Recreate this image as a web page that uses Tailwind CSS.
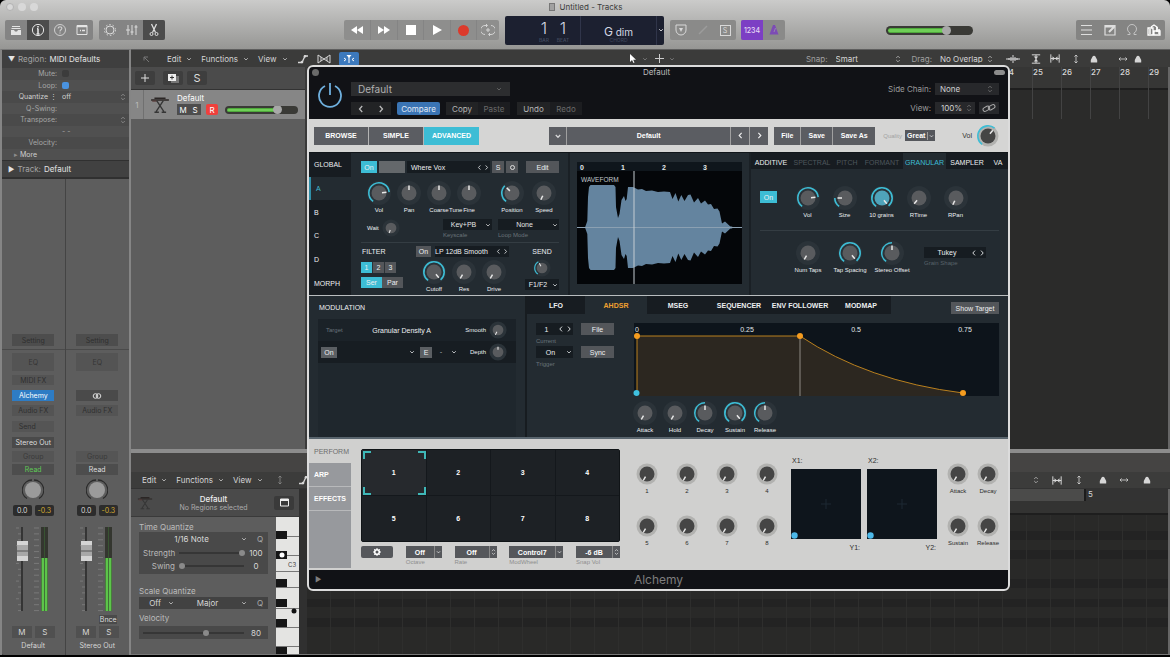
<!DOCTYPE html>
<html lang="en">
<head>
<meta charset="utf-8">
<title>Untitled - Tracks</title>
<script src="https://cdn.jsdelivr.net/npm/@tailwindcss/browser@4"></script>
</head>
<body class="relative flex h-screen flex-col overflow-hidden bg-black pb-[2px] font-[Inter,sans-serif] text-[8px] leading-none text-[#d6d6d6]">

<svg class="hidden" aria-hidden="true">
  <symbol id="down" viewBox="0 0 8 8"><path d="M2.2 3.200 4 5 5.800 3.200" fill="none" stroke="currentColor" stroke-opacity=".75"/></symbol>
  <symbol id="prev" viewBox="0 0 8 8"><path d="M5 1.600 2.800 4 5 6.400" fill="none" stroke="currentColor" stroke-opacity=".9"/></symbol>
  <symbol id="next" viewBox="0 0 8 8"><path d="M3 1.600 5.200 4 3 6.400" fill="none" stroke="currentColor" stroke-opacity=".9"/></symbol>
  <symbol id="step" viewBox="0 0 8 8"><path d="M2.2 3 4 1.200 5.800 3M2.200 5 4 6.800 5.800 5" fill="none" stroke="currentColor" stroke-width=".8" stroke-opacity=".8"/></symbol>
  <symbol id="fit" viewBox="0 0 12 10"><path d="M1 0v10M11 0v10M1 5h10" fill="none" stroke="currentColor" stroke-width="1.200"/><path d="M3 2.200 6 5 3 7.800zM9 2.200 6 5l3 2.800z" fill="currentColor"/></symbol>
  <symbol id="keys" viewBox="0 0 18 18"><path d="M1 4.500h16M4 3h10" stroke="#2b2625" stroke-width="1.400"/><path d="M2 5.500h4" stroke="#5a3a38"/><path d="M6 5l6.500 10M12 5 5.500 15M4 15.500h4M10.500 15.500h4" stroke="#363636" stroke-width="1.200" fill="none"/></symbol>
  <symbol id="curve" viewBox="0 0 12 10"><path d="M1 8.500h4L8 2h3" fill="none" stroke="currentColor" stroke-width="1.300"/><circle cx="5" cy="8" r="1.300" fill="currentColor"/><circle cx="8" cy="2.300" r="1.300" fill="currentColor"/></symbol>
  <symbol id="thumb" viewBox="0 0 8 8"><path d="M.8 7.400V5L2.600 1.600a1.600 1.600 0 0 1 2.800 0L7.200 5v2.400z" fill="currentColor"/></symbol>
  <symbol id="updown" viewBox="0 0 8 10"><path d="M4 1v8M2.400 2.600 4 1l1.600 1.600M2.400 7.400 4 9l1.600-1.600" fill="none" stroke="currentColor" stroke-opacity=".8"/></symbol>
  <symbol id="leftright" viewBox="0 0 10 8"><path d="M1 4h8M2.600 2.400 1 4l1.600 1.600M7.400 2.400 9 4 7.400 5.600" fill="none" stroke="currentColor" stroke-opacity=".8"/></symbol>
</svg>

<!-- Title bar and transport -->
<header class="flex h-[49px] shrink-0 flex-col rounded-t-md bg-gradient-to-b from-[#cbcbca] to-[#969694]">
  <div class="relative flex h-[14px] items-center justify-center gap-1 text-[8px] text-[#3c3c3c]">
    <div class="absolute left-[6px] flex gap-1">
      <button aria-label="Close" class="size-2 rounded-full border border-[#b2b2b2] bg-[#d8d8d8]"></button>
      <button aria-label="Minimise" class="size-2 rounded-full bg-[#d8d8d8]"></button>
      <button aria-label="Zoom" class="size-2 rounded-full bg-[#d8d8d8]"></button>
    </div>
    <svg class="size-2" viewBox="0 0 8 8"><path d="M1 0h6v8H1z" fill="#777"/><path d="M2 2h4M2 4h4M2 6h4" stroke="#ccc"/></svg>
    <h1>Untitled - Tracks</h1>
  </div>
  <div class="flex h-[32px] items-center pr-[5px] pl-[5px]">
    <div class="flex h-5 overflow-hidden rounded-xs bg-[#848484] text-[#e4e4e4]">
      <button aria-label="Library" class="grid w-[22px] place-items-center"><svg class="size-3" viewBox="0 0 12 12"><path d="M2 2h8v1H2zM1.500 4h9v1h-9zM1 6h3l1 1.500h2L8 6h3v5H1z" fill="currentColor"/></svg></button>
      <button aria-label="Inspector" class="grid w-[22px] place-items-center bg-[#4c4c4c]"><svg class="size-[14px]" viewBox="0 0 14 14"><circle cx="7" cy="7" r="5.600" fill="none" stroke="currentColor"/><path d="M7 3v1.500M7 5.500V11M5.500 11h3M6 5.800h1" stroke="currentColor" stroke-width="1.600"/></svg></button>
      <button aria-label="Help" class="grid w-[22px] place-items-center text-[#cfcfcf]"><svg class="size-[14px]" viewBox="0 0 14 14"><circle cx="7" cy="7" r="5.500" fill="none" stroke="currentColor"/><path d="M5.200 5.500c0-2.400 3.800-2.200 3.600 0C8.700 6.800 7 6.800 7 8.400M7 9.400v1.200" fill="none" stroke="currentColor" stroke-width="1.200"/></svg></button>
      <button aria-label="Toolbar" class="grid w-[22px] place-items-center"><svg class="size-3" viewBox="0 0 12 12"><path d="M1 1.500h10v9H1z" fill="none" stroke="currentColor"/><path d="M1 2.500h10M4 6.500h1M6 6.500h3" stroke="currentColor" stroke-width="1.600"/></svg></button>
    </div>
    <div class="ml-[6px] flex h-5 overflow-hidden rounded-xs bg-[#848484] text-[#dcdcdc]">
      <button aria-label="Smart controls" class="grid w-[22px] place-items-center"><svg class="size-[14px]" viewBox="0 0 14 14"><circle cx="7" cy="7" r="4" fill="none" stroke="currentColor"/><circle cx="7" cy="7" r="5.500" fill="none" stroke="currentColor" stroke-dasharray="1.500 2"/></svg></button>
      <button aria-label="Mixer" class="grid w-[22px] place-items-center"><svg class="size-[14px]" viewBox="0 0 14 14"><path d="M3 2v10M7 2v10M11 2v10M1 7h4M5.500 9h3M9.500 4h3" stroke="currentColor"/></svg></button>
      <button aria-label="Editors" class="grid w-[22px] place-items-center bg-[#4c4c4c]"><svg class="size-[14px]" viewBox="0 0 14 14"><path d="M4.500 1 8.500 9.500M9.500 1 5.500 9.500" stroke="currentColor" stroke-width="1.300"/><circle cx="4.500" cy="11" r="1.500" fill="none" stroke="currentColor"/><circle cx="9.500" cy="11" r="1.500" fill="none" stroke="currentColor"/></svg></button>
    </div>
    <div class="flex-[179]"></div>
    <div class="flex h-5 divide-x divide-[#848484] overflow-hidden rounded-xs bg-[#8e8e8d] text-white">
      <button aria-label="Rewind" class="grid w-[27px] place-items-center"><svg class="h-2 w-3" viewBox="0 0 12 8"><path d="M6 0v8L0 4zM12 0v8L6 4z" fill="currentColor"/></svg></button>
      <button aria-label="Forward" class="grid w-[27px] place-items-center"><svg class="h-2 w-3" viewBox="0 0 12 8"><path d="M0 0v8l6-4zM6 0v8l6-4z" fill="currentColor"/></svg></button>
      <button aria-label="Stop" class="grid w-[26px] place-items-center"><span class="size-[10px] bg-white"></span></button>
      <button aria-label="Play" class="grid w-[27px] place-items-center"><svg class="size-[10px]" viewBox="0 0 10 10"><path d="M1 0v10l9-5z" fill="currentColor"/></svg></button>
      <button aria-label="Record" class="grid w-[26px] place-items-center"><span class="size-[11px] rounded-full bg-[#dc3a2b]"></span></button>
      <button aria-label="Cycle" class="grid w-[22px] place-items-center text-[#d4d4d4]"><svg class="size-[14px]" viewBox="0 0 14 14"><path d="M4 11.500a4.500 4.500 0 0 1 0-9h2M10 2.500a4.500 4.500 0 0 1 0 9H8M5 1l1.500 1.500L5 4M9 10l-1.500 1.500L9 13M5 7h4M7 5v4" fill="none" stroke="currentColor"/></svg></button>
    </div>
    <div class="ml-[6px] flex h-[29px] w-[159px] rounded-xs bg-[#1c2030] text-[#d4d8e4]">
      <div class="flex flex-1 items-start justify-end gap-[3px] border-r border-[#30354a] pr-[9px] pt-[4px] text-[16px] font-light">
        <div class="flex w-4 flex-col items-center"><span>1</span><span class="mt-[2px] text-[5px] text-[#596078]">BAR</span></div><div class="flex w-4 flex-col items-center"><span>1</span><span class="mt-[2px] text-[5px] text-[#596078]">BEAT</span></div>
      </div>
      <div class="flex w-[75px] flex-col items-center pt-[10px]"><span class="text-[10px]"><span class="text-[12px]">G</span> dim</span><span class="text-[5px] text-[#434a60]">CHORD</span></div>
      <button aria-label="Display mode" class="grid w-2 place-items-center border-l border-[#30354a] text-white"><svg class="size-2"><use href="#down"/></svg></button>
    </div>
    <div class="ml-[6px] flex h-5 rounded-xs bg-[#8a8a89] text-[#d8d8d8]">
      <button aria-label="Replace" class="grid w-[22px] place-items-center"><svg class="size-3" viewBox="0 0 12 12"><path d="M1 1h10v5a5 5 0 0 1-10 0z" fill="none" stroke="currentColor"/><path d="M4 4h4L6 8z" fill="currentColor"/></svg></button>
      <button aria-label="Tuner" class="grid w-[22px] place-items-center text-[#9c9c9c]"><svg class="size-3" viewBox="0 0 12 12"><path d="M2 10l8-8" stroke="currentColor" stroke-width="1.500"/></svg></button>
      <button aria-label="Solo" class="grid w-[22px] place-items-center"><span class="grid size-[11px] place-items-center border border-current text-[7px]">S</span></button>
    </div>
    <div class="ml-[5px] flex h-5 overflow-hidden rounded-xs bg-[#8a8a89]">
      <button class="w-[22px] bg-[#7c3fc4] text-[7px] font-medium text-[#e4d8f4]">1234</button>
      <button aria-label="Metronome" class="grid w-[22px] place-items-center text-[#7c4bb5]"><svg class="size-[10px]" viewBox="0 0 10 10"><path d="M4 0h2l3.500 9.500h-9z" fill="currentColor"/><path d="M5 7 6.500 3" stroke="#aaa" stroke-width=".6"/></svg></button>
    </div>
    <div class="flex-[101]"></div>
    <hslider-bar label="Master volume" value="70" class="block h-[9px] w-[87px]"></hslider-bar>
    <div class="flex-[103]"></div>
    <div class="flex h-5 rounded-xs bg-[#848483] text-[#dedede]">
      <button aria-label="List editors" class="grid w-[22px] place-items-center"><svg class="size-3" viewBox="0 0 12 12"><path d="M0 1.500h11M0 6h11M0 10.500h11" stroke="currentColor"/></svg></button>
      <button aria-label="Notes" class="grid w-[23px] place-items-center"><svg class="size-3" viewBox="0 0 12 12"><path d="M1 1.500h10v9.500H1z" fill="none" stroke="currentColor" stroke-width="1.200"/><path d="M1 2.500h10M5 8l5-5" stroke="currentColor" stroke-width="2"/></svg></button>
      <button aria-label="Loops" class="grid w-[22px] place-items-center text-[#c4c4c4]"><svg class="size-3" viewBox="0 0 12 12"><path d="M4 10.500V9A4.500 4.500 0 1 1 8 9v1.500M1.500 10.500H4M8 10.500h2.500" fill="none" stroke="currentColor"/></svg></button>
      <button aria-label="Media" class="grid w-[22px] place-items-center text-white"><svg class="h-3 w-[14px]" viewBox="0 0 14 12"><path d="M1 4h5v7H1zM4 3l3-2 3 2v4M7 7h6v4H7z" fill="none" stroke="currentColor" stroke-width="1.300"/><path d="M10 3v5M12 5v5M3 5v5" stroke="currentColor" stroke-width="1.500"/></svg></button>
    </div>
  </div>
</header>

<div class="flex min-h-0 flex-1 rounded-b-sm bg-[#5d5d5d]">

  <!-- Inspector -->
  <aside class="flex w-[131px] shrink-0 flex-col border-x-2 border-t border-x-[#858585] border-t-[#777]">
    <button class="flex h-[18px] items-center gap-[3px] bg-[#3f3f3f] px-[6px] text-left text-[8px] text-[#e4e4e4]"><span class="text-[7px]">▼</span><span class="text-[#a5a5a5]">Region:</span>MIDI Defaults</button>
    <div class="grid h-[92px] grid-rows-8 bg-[#4a4a4a] text-[7px] text-[#a6a6a6] *:grid *:grid-cols-[55px_1fr_8px] *:items-center *:gap-x-[5px] *:pr-[2px] *:text-right">
      <label><span>Mute:</span><input type="checkbox" class="size-[7px] appearance-none rounded-xs bg-[#3c3c3c]"></label>
      <label class="bg-[#505050]"><span>Loop:</span><input type="checkbox" checked class="size-[7px] appearance-none rounded-xs bg-[#4a93e0]"></label>
      <div><span class="text-[#d0d0d0]">Quantize ⋮</span><span class="text-left text-[#d0d0d0]">off</span><svg class="size-2"><use href="#step"/></svg></div>
      <div class="bg-[#505050]"><span>Q-Swing:</span></div>
      <div><span>Transpose:</span><span></span><svg class="size-2"><use href="#step"/></svg></div>
      <div class="bg-[#505050]"><span></span><span class="text-left">- -</span></div>
      <div><span>Velocity:</span></div>
      <div class="bg-[#505050] text-[#cfcfcf]"><button class="pl-3 text-left"><span class="text-[#8c8c8c]">▸</span> More</button></div>
    </div>
    <button class="flex h-[19px] items-center gap-[3px] border-t border-b-2 border-t-[#303030] border-b-[#303030] bg-[#414141] px-[6px] text-left text-[8px] text-[#e4e4e4]"><span class="text-[7px]">▶</span><span class="text-[#a5a5a5]">Track:</span><span>Default</span></button>
    <div class="grid flex-1 grid-cols-2 divide-x divide-[#444]">
      <section data-strip="Default" class="flex flex-col items-center justify-end pb-[3px]"></section>
      <section data-strip="Stereo Out" data-bus="true" class="flex flex-col items-center justify-end pb-[3px]"></section>
    </div>
  </aside>

  <main class="flex min-w-0 flex-1 flex-col">
    <!-- Tracks area -->
    <nav class="flex h-[18px] shrink-0 items-center border-t border-[#5e5e5e] bg-[#3b3b3a] pr-[28px] text-[8px]">
      <button aria-label="Back" class="ml-[11px] w-2 text-[#777]"><svg class="size-2" viewBox="0 0 8 8"><path d="M7 7 2 2M2 5.500V2h4" fill="none" stroke="currentColor"/></svg></button>
      <button class="ml-[17px] flex items-center gap-1">Edit<svg class="size-2"><use href="#down"/></svg></button>
      <button class="ml-[8px] flex items-center gap-1">Functions<svg class="size-2"><use href="#down"/></svg></button>
      <button class="ml-[8px] flex items-center gap-1">View<svg class="size-2"><use href="#down"/></svg></button>
      <button aria-label="Automation" class="ml-[8px]"><svg class="h-[10px] w-3"><use href="#curve"/></svg></button>
      <button aria-label="Flex" class="ml-2"><svg class="h-[10px] w-[14px]" viewBox="0 0 14 10"><path d="M1 1v8M13 1v8M1 1l6 4 6-4M1 9l6-4 6 4M4 3v4M10 3v4" fill="none" stroke="currentColor"/></svg></button>
      <button aria-label="Catch" class="ml-2 grid h-[14px] w-5 place-items-center rounded-xs bg-[#3c79bd] text-white"><svg class="h-[10px] w-3" viewBox="0 0 12 10"><path d="M6 3v6M1 4l2 1.500L1 7M11 4 9 5.500 11 7" stroke="currentColor" fill="none"/><path d="M3.500 1h5L6 4z" fill="currentColor"/></svg></button>
      <div class="flex-[270]"></div>
      <button aria-label="Pointer tool" class="flex items-center gap-1"><svg class="size-[9px]" viewBox="0 0 9 9"><path d="M2 0v8l2-2 1.500 3 1-.5L5.200 5.800H8z" fill="#fff"/></svg><svg class="size-2 text-[#888]"><use href="#down"/></svg></button>
      <button aria-label="Marquee tool" class="ml-[6px] flex items-center gap-1"><svg class="size-[9px]" viewBox="0 0 9 9"><path d="M4.500 0v9M0 4.500h9" stroke="#ccc"/></svg><svg class="size-2 text-[#888]"><use href="#down"/></svg></button>
      <div class="flex-[130]"></div>
      <label class="flex items-center gap-2"><span class="text-[#a0a0a0]">Snap:</span><select class="w-[58px] appearance-none bg-transparent"><option>Smart</option></select></label><svg class="size-2"><use href="#step"/></svg>
      <label class="ml-[10px] flex items-center gap-2"><span class="text-[#a0a0a0]">Drag:</span><select class="w-[46px] appearance-none bg-transparent"><option>No Overlap</option></select></label><svg class="size-2"><use href="#step"/></svg>
      <button aria-label="Waveform zoom" class="ml-3"><svg class="h-[10px] w-[14px]" viewBox="0 0 14 10"><path d="M0 5h14M3 4v2M5 3v4M7 1v8M9 3v4M11 4v2" stroke="currentColor"/></svg></button>
      <button aria-label="Vertical fit" class="ml-[11px]"><svg class="h-3 w-[10px] rotate-90"><use href="#fit"/></svg></button>
      <button aria-label="Horizontal fit" class="ml-[9px]"><svg class="h-[9px] w-[10px]"><use href="#fit"/></svg></button>
      <svg class="ml-3 h-[10px] w-2"><use href="#updown"/></svg><svg class="ml-[10px] size-2"><use href="#thumb"/></svg>
      <svg class="ml-5 h-2 w-[10px]"><use href="#leftright"/></svg><svg class="ml-[6px] size-2"><use href="#thumb"/></svg>
    </nav>
    <div class="flex h-[382px] shrink-0">
      <div class="flex w-[174px] shrink-0 flex-col">
        <div class="flex h-[22px] items-center gap-1 bg-[#4b4b4b] pl-1 text-[#ddd]">
          <button aria-label="Add track" class="grid h-[14px] w-5 place-items-center rounded-xs bg-[#3e3e3e]"><svg class="size-2" viewBox="0 0 8 8"><path d="M4 0v8M0 4h8" stroke="currentColor"/></svg></button>
          <button aria-label="Duplicate track" class="ml-1 grid h-[14px] w-5 place-items-center rounded-xs bg-[#3e3e3e]"><svg class="h-[9px] w-[11px]" viewBox="0 0 11 9"><path d="M3 2h8v7H3z" fill="#777"/><path d="M0 0h8v7H0z" fill="#eee"/><path d="M4 1.500v4M2 3.500h4" stroke="#333"/></svg></button>
          <button class="h-[14px] w-5 rounded-xs bg-[#3e3e3e] text-[11px]">S</button>
        </div>
        <div class="flex h-[30px] items-center border-t border-[#333] bg-[#868686]">
          <span class="grid w-[13px] self-stretch place-items-center border-r border-[#707070] text-[8px] text-[#bbb]">1</span>
          <svg class="ml-[6px] size-5"><use href="#keys"/></svg>
          <div class="ml-[7px] flex flex-1 flex-col gap-[2px]">
            <span class="text-[8px] text-white">Default</span>
            <div class="flex items-center text-[8px] text-white">
              <button class="h-[11px] w-3 bg-[#4d4d4d]">M</button><button class="h-[11px] w-3 bg-[#4d4d4d]">S</button>
              <button class="ml-[5px] h-[11px] w-3 rounded-xs bg-[#f0403c]">R</button>
              <hslider-bar label="Track volume" value="72" class="ml-[7px] block h-[8px] w-[73px]"></hslider-bar>
            </div>
          </div>
        </div>
      </div>
      <div class="w-[2px] bg-[#3a3a3a]"></div>
      <div class="flex flex-1 justify-end overflow-hidden border-r-2 border-[#666] bg-[#2b2b2a] bg-[linear-gradient(#363635_22px,transparent_22px)] text-[8px] font-medium text-[#d8d8d8]">
        <div class="flex h-[52px] bg-[linear-gradient(transparent_21px,#1e1e1e_21px,#1e1e1e_23px,transparent_23px)] *:w-[29px] *:border-l *:border-[#434343] *:pt-[1px]">
          <span>24</span><span>25</span><span>26</span><span>27</span><span>28</span><span class="w-[20px]!">29</span>
        </div>
      </div>
    </div>
    <div class="h-1 shrink-0 bg-[#8c8c8c]"></div>

    <!-- Piano roll -->
    <section class="flex min-h-0 flex-1 flex-col border-b border-[#777]">
      <div class="h-[19px] shrink-0 bg-[#454443]"></div>
      <nav class="flex h-[17px] shrink-0 items-center border-b border-[#333] bg-[#3c3c3b] pr-[19px]">
        <button class="ml-[11px] flex items-center gap-1">Edit<svg class="size-2"><use href="#down"/></svg></button>
        <button class="ml-[8px] flex items-center gap-1">Functions<svg class="size-2"><use href="#down"/></svg></button>
        <button class="ml-[8px] flex items-center gap-1">View<svg class="size-2"><use href="#down"/></svg></button>
        <svg class="ml-3 h-[10px] w-2 text-[#8a8a8a]"><use href="#updown"/></svg>
        <svg class="ml-[14px] h-[10px] w-3"><use href="#curve"/></svg>
        <div class="flex-1"></div>
        <svg class="size-2"><use href="#step"/></svg>
        <svg class="ml-3 h-[9px] w-[10px]"><use href="#fit"/></svg>
        <svg class="ml-[13px] h-[10px] w-2"><use href="#updown"/></svg><svg class="ml-4 size-2"><use href="#thumb"/></svg>
        <svg class="ml-3 h-2 w-[10px]"><use href="#leftright"/></svg><svg class="ml-[14px] size-2"><use href="#thumb"/></svg>
      </nav>
      <div class="flex min-h-0 flex-1">
        <div class="flex w-[168px] shrink-0 flex-col">
          <div class="flex h-[28px] shrink-0 items-center border-b border-[#3a3a3a] bg-[#4a4a4a] pr-[5px] pl-[6px]">
            <svg class="size-4"><use href="#keys"/></svg>
            <div class="flex flex-1 flex-col items-center gap-[1px] text-[8px]"><span class="font-medium text-[#eee]">Default</span><span class="text-[7px] text-[#aaa]">No Regions selected</span></div>
            <button aria-label="Inspector" class="grid h-[14px] w-5 place-items-center rounded-xs bg-[#3a3a3a]"><svg class="size-[9px]" viewBox="0 0 9 9"><path d="M.5 1h8v7h-8z" fill="none" stroke="#eee"/><path d="M.5 2h8" stroke="#eee" stroke-width="2"/></svg></button>
          </div>
          <div class="flex min-h-0 flex-1">
            <div class="flex flex-1 flex-col pt-[6px] pr-2 pl-2 text-[8px]">
              <span class="text-[#bcbcbc]">Time Quantize</span>
              <div class="mt-[1px] flex h-[42px] flex-col gap-[2px] bg-[#494949] px-1 py-[1px] text-[#d8d8d8]">
                <div class="flex h-3 items-center"><select aria-label="Time quantize" class="flex-1 appearance-none bg-transparent text-center"><option>1/16 Note</option></select><svg class="size-2"><use href="#down"/></svg><button class="ml-2 w-2 text-[#aaa]">Q</button></div>
                <label class="flex h-3 items-center gap-1"><span class="w-8 text-right text-[#b8b8b8]">Strength</span><line-slider value="97" class="block h-2 flex-1"></line-slider><output class="w-4 text-center">100</output></label>
                <label class="flex h-[10px] items-center gap-1"><span class="w-8 text-right text-[#b8b8b8]">Swing</span><line-slider value="5" class="block h-2 flex-1"></line-slider><output class="w-4 text-center">0</output></label>
              </div>
              <span class="mt-[13px] text-[#bcbcbc]">Scale Quantize</span>
              <div class="mt-[2px] flex h-3 items-center bg-[#424242] px-1"><select aria-label="Scale quantize" class="w-6 appearance-none bg-transparent text-center"><option>Off</option></select><svg class="size-2"><use href="#down"/></svg><select aria-label="Scale" class="flex-1 appearance-none bg-transparent text-center"><option>Major</option></select><svg class="size-2"><use href="#down"/></svg><button class="ml-2 w-2 text-[#aaa]">Q</button></div>
              <span class="mt-[5px] text-[#bcbcbc]">Velocity</span>
              <label class="mt-1 flex h-[13px] items-center gap-1 bg-[#494949] px-1"><line-slider value="62" class="block h-2 flex-1"></line-slider><output class="w-4 text-center">80</output></label>
            </div>
            <svg class="h-full w-[23px]" viewBox="0 0 23 137" preserveAspectRatio="xMinYMin slice" aria-label="Keyboard">
              <path d="M0 0h23v137H0z" fill="#e4e4e2"/>
              <path d="M0 19.500h23M0 38.500h23M0 54.500h23M0 70.500h23M0 91.500h23M0 110.500h23M0 129.500h23" stroke="#777"/>
              <path d="M0 14h11v8H0zM0 34h11v8H0zM0 62h11v8H0zM0 82h11v8H0zM0 102h11v8H0zM0 130h11v7H0z" fill="#161616"/>
              <circle cx="6" cy="38" r="2.500" fill="#fff"/><circle cx="18" cy="94" r="2.500" fill="#111"/>
              <text x="12" y="50" font-size="6" fill="#444">C3</text>
            </svg>
          </div>
        </div>
        <div class="w-2 bg-[#303030]"></div>
        <div class="flex flex-1 flex-col border-r-2 border-[#666] bg-[#272726]">
          <div class="flex h-[12px] justify-end bg-[#333]"><span class="flex-1 bg-[#4b4b4a]"></span><span class="w-[84px] border-l-2 border-[#1c1c1c] pt-[1px] pl-[2px]">5</span></div>
          <div class="h-[14px] border-b-2 border-[#1e1e1e] bg-[#333332]"></div>
          <div class="flex-1 bg-[repeating-linear-gradient(90deg,transparent_0_23px,#2e2e2d_23px_24px),linear-gradient(#292928_0_16px,#232323_16px_25px,#292928_25px_35px,#232323_35px_44px,#292928_44px_64px,#232323_64px_73px,#292928_73px_84px,#232323_84px_92px,#292928_92px_103px,#232323_103px_112px,#292928_112px)]"></div>
        </div>
      </div>
    </section>
  </main>
</div>

<!-- Alchemy plug-in: floats over the project window -->
<article class="absolute top-[65px] right-[160px] left-[307px] overflow-hidden rounded-md border-2 border-[#dcdcdc] bg-[#111216]">
  <header class="flex h-[52px] flex-col text-[#9b9b9b]">
    <div class="flex h-[10px] items-center justify-between px-[3px]">
      <button aria-label="Close plug-in" class="size-[7px] rounded-full bg-[#6a6a6a]"></button>
      <h2 class="text-[8px] text-[#bdbdbd]">Default</h2>
      <button aria-label="Collapse" class="h-[5px] w-[11px] rounded-full bg-[#8c8c8c]"></button>
    </div>
    <div class="flex flex-1 pr-[9px] pl-[9px]">
      <button aria-label="Power" class="mt-[5px] size-[26px] text-[#6fb0de]"><svg class="size-[26px]" viewBox="0 0 26 26"><path d="M12 1v12M7 4a11 11 0 1 0 10 0" fill="none" stroke="currentColor" stroke-width="1.800"/></svg></button>
      <div class="ml-[7px] flex flex-col gap-[6px] pt-[5px]">
        <div class="flex h-[14px] w-[159px] items-center bg-[#2c2d2f] px-[7px] text-[10px] text-[#b0b0b0]"><select aria-label="Setting" class="flex-1 appearance-none bg-transparent"><option>Default</option></select><svg class="size-2 text-[#777]"><use href="#down"/></svg></div>
        <div class="flex h-[13px] text-[8px]">
          <button aria-label="Previous" class="grid w-5 place-items-center bg-[#222325] text-[#ccc]"><svg class="size-[10px]"><use href="#prev"/></svg></button><button aria-label="Next" class="grid w-5 place-items-center bg-[#222325] text-[#ccc]"><svg class="size-[10px]"><use href="#next"/></svg></button>
          <button class="ml-[6px] w-[43px] rounded-xs bg-[#3a74b4] text-[#e2eaf4]">Compare</button>
          <button class="ml-[6px] w-[32px] bg-[#222325] text-[#b5b5b5]">Copy</button><button class="w-[32px] bg-[#1c1d20] text-[#6a6a6a]">Paste</button>
          <button class="ml-[7px] w-[33px] bg-[#222325] text-[#b5b5b5]">Undo</button><button class="w-[32px] bg-[#1c1d20] text-[#6a6a6a]">Redo</button>
        </div>
      </div>
      <div class="ml-auto flex flex-col items-end gap-[7px] pt-[6px] text-[8px]">
        <div class="flex h-3 items-center gap-1"><label for="side">Side Chain:</label><span class="flex h-3 w-[64px] items-center bg-[#27282b] px-[5px] text-[#d0d0d0]"><select id="side" class="min-w-0 flex-1 appearance-none bg-transparent"><option>None</option></select><svg class="size-2 text-[#888]"><use href="#step"/></svg></span></div>
        <div class="flex h-3 items-center gap-1"><label for="view">View:</label><span class="flex h-3 w-10 items-center bg-[#27282b] pr-[2px] pl-[6px] text-[#d0d0d0]"><select id="view" class="min-w-0 flex-1 appearance-none bg-transparent"><option>100%</option></select><svg class="size-2 text-[#888]"><use href="#step"/></svg></span><button aria-label="Link" class="grid h-3 w-5 place-items-center bg-[#27282b] text-[#aaa]"><svg class="h-[10px] w-[14px]" viewBox="0 0 14 10"><rect x="1" y="3.800" width="7" height="3.800" rx="1.900" transform="rotate(-30 4.500 6)" fill="none" stroke="currentColor"/><rect x="6" y="2.400" width="7" height="3.800" rx="1.900" transform="rotate(-30 9.500 4)" fill="none" stroke="currentColor"/></svg></button></div>
      </div>
    </div>
  </header>

  <div class="font-['Liberation_Sans',sans-serif]">
    <!-- Mode and preset bar -->
    <div class="flex h-[33px] items-center bg-[#d5d5d4] pr-[6px] pl-[5px] text-[7px] text-white">
      <div class="flex h-[18px] divide-x divide-[#b4b4b4] bg-[#5b5d62] font-bold *:w-[55px]"><button>BROWSE</button><button>SIMPLE</button><button class="bg-[#3dbdd5]">ADVANCED</button></div>
      <div class="mr-[6px] ml-[70px] flex h-[18px] flex-1 divide-x divide-[#a0a0a0] bg-[#5b5d62]"><button aria-label="Presets" class="grid w-[18px] place-items-center"><svg class="size-[10px]"><use href="#down"/></svg></button><button class="flex-1 font-bold">Default</button><button aria-label="Previous preset" class="grid w-[19px] place-items-center"><svg class="size-[9px]"><use href="#prev"/></svg></button><button aria-label="Next preset" class="grid w-[18px] place-items-center"><svg class="size-[9px]"><use href="#next"/></svg></button></div>
      <div class="flex h-[18px] divide-x divide-[#a0a0a0] bg-[#5b5d62] font-bold"><button class="w-[27px]">File</button><button class="w-[32px]">Save</button><button class="w-[42px]">Save As</button></div>
      <label for="quality" class="ml-[8px] w-[22px] text-[6px] text-[#a2a2a2]">Quality</label>
      <span class="flex h-[11px] w-[30px] items-center bg-[#55575c]"><select id="quality" class="min-w-0 flex-1 appearance-none bg-transparent text-center font-bold"><option>Great</option></select><svg class="size-2 border-l border-[#999]"><use href="#down"/></svg></span>
      <knob-dial aria="Volume" side="Vol" angle="40" arc light class="ml-[27px] flex items-center text-[#333]"></knob-dial>
    </div>

    <!-- Source -->
    <div class="flex h-[143px] border-t border-[#11161a] bg-[#232b31] text-[6px] text-[#eceff1]">
      <nav class="flex w-[42px] flex-col bg-[#171c21] text-[7px] *:h-6 *:pl-[5px] *:text-left">
        <button>GLOBAL</button><button class="border-l-2 border-[#2f8fa8] bg-[#232b31] text-[#41b9d2]">A</button><button>B</button><button>C</button><button>D</button><button>MORPH</button>
      </nav>
      <section class="flex w-[219px] flex-col border-r-2 border-[#1a2025] pt-[8px] pr-[9px] pl-[10px]">
        <div class="flex h-3 gap-[2px]">
          <button class="w-4 bg-[#3dbdd5] text-[7px]">On</button><span class="w-[26px] bg-[#64686b]"></span>
          <span class="flex flex-1 items-center bg-[#161c21] pl-1 text-[7px]"><span class="flex-1">Where Vox</span><button aria-label="Previous source"><svg class="size-[7px]"><use href="#prev"/></svg></button><button aria-label="Next source"><svg class="size-[7px]"><use href="#next"/></svg></button></span>
          <button class="w-3 bg-[#53565a] text-[7px]">S</button><button aria-label="Options" class="grid w-3 place-items-center bg-[#53565a]"><span class="size-[5px] rounded-full border border-[#ddd]"></span></button>
          <button class="ml-[6px] w-[33px] bg-[#53565a] text-[7px]">Edit</button>
        </div>
        <div class="relative mt-[6px] flex pl-[3px]">
          <knob-dial label="Vol" angle="85" arc class="w-[30px]"></knob-dial><knob-dial label="Pan" angle="0" class="w-[30px]"></knob-dial><knob-dial label="Coarse" angle="0" class="w-[30px]"></knob-dial><knob-dial label="Fine" angle="0" class="w-[30px]"></knob-dial>
          <span class="absolute bottom-0 left-[88px]">Tune</span>
          <knob-dial label="Position" angle="-45" arc class="ml-[13px] w-[30px]"></knob-dial><knob-dial label="Speed" angle="-155" class="ml-[2px] w-[30px]"></knob-dial>
        </div>
        <div class="mt-[5px] flex h-5">
          <knob-dial aria="Wait" side="Wait" angle="-160" small class="flex items-center pl-[6px]"></knob-dial>
          <div class="ml-auto flex flex-col gap-[2px] text-[#6a7379]"><span class="mt-[1px] flex h-[11px] w-[49px] items-center bg-[#161c21] text-[7px] text-[#e4e4e4]"><select aria-label="Keyscale" class="min-w-0 flex-1 appearance-none bg-transparent text-center"><option>Key+PB</option></select><svg class="size-2"><use href="#down"/></svg></span><span>Keyscale</span></div>
          <div class="ml-[6px] flex flex-col gap-[2px] text-[#6a7379]"><span class="mt-[1px] flex h-[11px] w-[61px] items-center bg-[#161c21] text-[7px] text-[#e4e4e4]"><select aria-label="Loop mode" class="min-w-0 flex-1 appearance-none bg-transparent text-center"><option>None</option></select><svg class="size-2"><use href="#down"/></svg></span><span>Loop Mode</span></div>
        </div>
        <div class="mt-1 flex border-t border-[#343d43] pt-[3px]">
          <div class="flex w-[42px] flex-col text-[7px]">
            <span class="h-3 pt-[2px] pl-[1px]">FILTER</span>
            <div class="mt-1 flex h-[11px] w-[35px] divide-x divide-[#2c3338] bg-[#53565a] *:flex-1"><button class="bg-[#3dbdd5]">1</button><button>2</button><button>3</button></div>
            <div class="mt-1 flex h-[11px] bg-[#53565a] *:flex-1"><button class="bg-[#3dbdd5]">Ser</button><button>Par</button></div>
          </div>
          <div class="ml-[13px] flex w-[93px] flex-col">
            <div class="flex h-[12px] gap-1 pb-[1px] text-[7px]"><button class="w-[15px] bg-[#53565a]">On</button><span class="flex flex-1 items-center bg-[#161c21]"><span class="flex-1 whitespace-nowrap">LP 12dB Smooth</span><svg class="size-[7px]"><use href="#prev"/></svg><svg class="size-[7px]"><use href="#next"/></svg></span></div>
            <div class="flex pl-[3px]"><knob-dial label="Cutoff" angle="140" arc class="w-[30px]"></knob-dial><knob-dial label="Res" angle="-150" class="w-[30px]"></knob-dial><knob-dial label="Drive" angle="-150" class="w-[30px]"></knob-dial></div>
          </div>
          <div class="ml-auto flex w-[34px] flex-col items-center">
            <span class="h-3 pt-[2px] text-[7px]">SEND</span>
            <knob-dial aria="Send" angle="-30" arc small></knob-dial>
            <span class="mt-[1px] flex h-[11px] w-full items-center bg-[#161c21] text-[7px]"><select aria-label="Send routing" class="min-w-0 flex-1 appearance-none bg-transparent text-center"><option>F1/F2</option></select><svg class="size-2"><use href="#down"/></svg></span>
          </div>
        </div>
      </section>
      <section class="w-[181px] border-r-2 border-[#1a2025] px-[7px] pt-[9px]">
        <svg class="h-[122px] w-full bg-[#040609]" viewBox="0 0 165 122" preserveAspectRatio="xMinYMin meet" role="img" aria-label="Waveform">
          <path d="M0 0h165v9H0z" fill="#0f161c"/>
          <g fill="#e4e8ea" font-size="7" font-weight="bold"><text x="3" y="8">0</text><text x="44" y="8">1</text><text x="85" y="8">2</text><text x="126" y="8">3</text></g>
          <path id="wave" fill="#64849f" d="M0 65.500h8L10.300 59 11 35l1-10 1.500-2H37l1.500 2 .5 20 2 11 1.500-4 2-14L47 34l1.500 5 1.200-2L51 25h5l5 2.500 4-.5 4 2 6-.5 6 1.500 6-.5 6 .5 2.500 7 3-6 2.800 8.500 3-6.500 3.200 6 3.500-6 2.500-.5 3.500 8 4-4.500 3 5.500 4-3 3 4 3-.5 3 5 3.500-.5 2 3 2.500 12 3-2 7.500 7z"/>
          <use href="#wave" transform="translate(0 131) scale(1 -1)"/>
          <path d="M0 65.500h165" stroke="#8ba0b2"/><path d="M57 9v113" stroke="#c4ccd2"/>
          <text x="4" y="20" fill="#c0c6ca" font-size="6.500">WAVEFORM</text>
        </svg>
      </section>
      <section class="flex min-w-0 flex-1 flex-col">
        <nav class="flex h-[16px] bg-[#171c21] text-[7px] *:border-t-2 *:border-transparent"><button class="w-10">ADDITIVE</button><button class="w-[42px] text-[#4d565c]">SPECTRAL</button><button class="w-7 text-[#4d565c]">PITCH</button><button class="w-[42px] text-[#4d565c]">FORMANT</button><button class="w-[43px] bg-[#232b31] text-[#3dbdd5]">GRANULAR</button><button class="w-[42px]">SAMPLER</button><button class="flex-1">VA</button></nav>
        <div class="mx-[9px] mt-[15px] flex border-b border-[#343d43] pb-3">
          <button class="mt-[7px] h-3 w-[17px] bg-[#3dbdd5] text-[7px]">On</button>
          <knob-dial label="Vol" angle="85" arc class="ml-3 w-[37px]"></knob-dial><knob-dial label="Size" angle="-90" arc class="w-[37px]"></knob-dial><knob-dial label="10 grains" angle="140" arc lit class="w-[37px]"></knob-dial><knob-dial label="RTime" angle="-140" class="w-[37px]"></knob-dial><knob-dial label="RPan" angle="-155" class="w-[37px]"></knob-dial>
        </div>
        <div class="mt-[8px] flex pl-9">
          <knob-dial label="Num Taps" angle="-150" class="w-[42px]"></knob-dial><knob-dial label="Tap Spacing" angle="140" arc class="w-[42px]"></knob-dial><knob-dial label="Stereo Offset" angle="0" arc class="w-[42px]"></knob-dial>
          <div class="mt-[8px] ml-[11px] flex flex-col gap-[2px]"><span class="flex h-[11px] w-[62px] items-center bg-[#161c21] text-[7px]"><span class="flex-1 text-center">Tukey</span><svg class="size-2"><use href="#prev"/></svg><svg class="size-2"><use href="#next"/></svg></span><span class="text-[#59636a]">Grain Shape</span></div>
        </div>
      </section>
    </div>

    <!-- Modulation -->
    <div class="flex h-[144px] border-t border-b-2 border-t-[#b9bdbf] border-b-[#59656e] bg-[#232b31] text-[6px] text-[#eceff1]">
      <section class="flex w-[216px] flex-col px-[9px]">
        <h3 class="py-[8px] pl-[1px] text-[7px]">MODULATION</h3>
        <div class="flex flex-1 flex-col bg-[#1f272d]">
          <div class="flex h-[22px] items-center bg-[#1b2228] px-2"><span class="w-[34px] text-[#69737a]">Target</span><span class="flex-1 text-center text-[7px]">Granular Density A</span><knob-dial aria="Smooth" side="Smooth" angle="-150" small class="ml-[22px] flex items-center"></knob-dial></div>
          <div class="flex h-[22px] items-center bg-[#171d22] pr-2 pl-[3px]"><button class="h-[11px] w-4 bg-[#5b5f63] text-[7px]">On</button><span class="flex-1"></span><svg class="size-2"><use href="#down"/></svg><button class="ml-1 h-[11px] w-3 bg-[#5b5f63] text-[7px]">E</button><span class="ml-2">-</span><svg class="ml-2 size-2"><use href="#down"/></svg><knob-dial aria="Depth" side="Depth" angle="0" small class="ml-3 flex items-center"></knob-dial></div>
        </div>
      </section>
      <section class="flex min-w-0 flex-1 flex-col border-l-2 border-[#171c20]">
        <nav class="flex h-[18px] text-[7px] font-bold *:h-[18px]"><button class="w-[58px] bg-[#171c21]">LFO</button><button class="w-[62px] text-[#f0a030]">AHDSR</button><button class="w-[62px] bg-[#171c21]">MSEG</button><button class="w-[60px] bg-[#171c21]">SEQUENCER</button><button class="w-[62px] bg-[#171c21]">ENV FOLLOWER</button><button class="w-[60px] bg-[#171c21]">MODMAP</button><button class="mt-[6px] mr-[9px] ml-auto h-3! w-[48px] bg-[#53565a] font-normal">Show Target</button></nav>
        <div class="flex flex-1 gap-[20px] pt-[9px] pr-[9px] pl-[9px]">
          <div class="grid h-[46px] grid-cols-[37px_33px] grid-rows-[12px_11px_12px_11px] gap-x-2 text-[7px]">
            <span class="flex items-center bg-[#161c21]"><span class="flex-1 text-center">1</span><svg class="size-2"><use href="#prev"/></svg><svg class="size-2"><use href="#next"/></svg></span><button class="bg-[#53565a]">File</button>
            <span class="col-span-2 pt-[3px] text-[6px] text-[#69737a]">Current</span>
            <span class="flex items-center bg-[#161c21]"><select aria-label="Trigger" class="min-w-0 flex-1 appearance-none bg-transparent text-center"><option>On</option></select><svg class="size-2"><use href="#down"/></svg></span><button class="bg-[#53565a]">Sync</button>
            <span class="col-span-2 pt-[3px] text-[6px] text-[#69737a]">Trigger</span>
          </div>
          <div class="flex flex-1 flex-col">
            <svg class="h-[73px] w-full overflow-visible bg-[#0d141b]" viewBox="0 0 365 73" preserveAspectRatio="xMinYMin meet" role="img" aria-label="Envelope">
              <path d="M3 13h163Q233 58 329 70v3H3z" fill="#2c2720"/>
              <path d="M3 70V13h163Q233 58 329 70" fill="none" stroke="#b9801e"/>
              <path d="M166 13v60" stroke="#8d8a83"/>
              <g fill="#f59c1f"><circle cx="3" cy="13" r="3"/><circle cx="166" cy="13" r="3"/><circle cx="329" cy="70" r="3"/></g><circle cx="2.500" cy="70" r="3" fill="#3fc1e0"/>
              <g fill="#e2e6e8" font-size="7" text-anchor="middle"><text x="3" y="8.500">0</text><text x="113" y="8.500">0.25</text><text x="222" y="8.500">0.5</text><text x="331" y="8.500">0.75</text></g>
            </svg>
            <div class="-ml-1 flex pt-[3px]"><knob-dial label="Attack" angle="-150" class="w-[30px]"></knob-dial><knob-dial label="Hold" angle="-150" class="w-[30px]"></knob-dial><knob-dial label="Decay" angle="0" arc class="w-[30px]"></knob-dial><knob-dial label="Sustain" angle="140" arc class="w-[30px]"></knob-dial><knob-dial label="Release" angle="0" arc class="w-[30px]"></knob-dial></div>
          </div>
        </div>
      </section>
    </div>

    <!-- Performance -->
    <div class="flex h-[131px] bg-[#d0d0cf] text-[6px] text-[#2c2c2c]">
      <nav class="flex w-[42px] flex-col pb-[2px] text-[7px] text-white *:pl-[5px] *:text-left"><button class="h-6 shrink-0 text-[#6d6d6d]">PERFORM</button><button class="h-6 border-b border-[#b8b9bb] bg-[#97999d] font-bold">ARP</button><button class="h-6 border-b border-[#b8b9bb] bg-[#97999d] font-bold">EFFECTS</button><span class="flex-1 bg-[#97999d]"></span></nav>
      <div class="ml-[10px] flex w-[259px] flex-col pt-[10px]">
        <div class="grid h-[93px] grid-cols-4 grid-rows-2 gap-[1px] rounded-xs border border-[#101417] bg-[#14181c] text-[7px] font-bold text-white *:bg-[#1d2125]">
          <button class="relative bg-[#26292d]!">1
            <span class="absolute top-[1px] left-[1px] size-2 border-t-2 border-l-2 border-[#3fb8b8]"></span><span class="absolute top-[1px] right-0 size-2 border-t-2 border-r-2 border-[#3fb8b8]"></span><span class="absolute bottom-0 left-[1px] size-2 border-b-2 border-l-2 border-[#3fb8b8]"></span><span class="absolute right-0 bottom-0 size-2 border-r-2 border-b-2 border-[#3fb8b8]"></span></button>
          <button>2</button><button>3</button><button>4</button><button>5</button><button>6</button><button>7</button><button>8</button>
        </div>
        <div class="mt-1 flex items-start justify-between text-[6px] text-[#8e8e8e]">
          <button aria-label="Performance settings" class="grid h-3 w-8 place-items-center rounded-xs bg-[#55575b]"><svg class="size-2" viewBox="0 0 8 8"><circle cx="4" cy="4" r="2.300" fill="none" stroke="#fff" stroke-width="1.600"/><path d="M4 0v1.500M4 6.500V8M0 4h1.500M6.500 4H8M1.200 1.200l1 1M5.800 5.800l1 1M6.800 1.200l-1 1M2.200 5.800l-1 1" stroke="#fff"/></svg></button>
          <label class="flex flex-col gap-[1px]"><span class="flex h-3 w-9 items-center bg-[#55575b] text-[7px] font-bold text-white"><select class="min-w-0 flex-1 appearance-none bg-transparent text-center"><option>Off</option></select><svg class="h-3 w-2 border-l border-[#888]"><use href="#down"/></svg></span>Octave</label>
          <label class="flex flex-col gap-[1px]"><span class="flex h-3 w-[42px] items-center bg-[#55575b] text-[7px] font-bold text-white"><select class="min-w-0 flex-1 appearance-none bg-transparent text-center"><option>Off</option></select><svg class="h-3 w-2 border-l border-[#888]"><use href="#step"/></svg></span>Rate</label>
          <label class="flex flex-col gap-[1px]"><span class="flex h-3 w-[54px] items-center bg-[#55575b] text-[7px] font-bold text-white"><select class="min-w-0 flex-1 appearance-none bg-transparent text-center"><option>Control7</option></select><svg class="h-3 w-2 border-l border-[#888]"><use href="#down"/></svg></span>ModWheel</label>
          <label class="flex flex-col gap-[1px]"><span class="flex h-3 w-[44px] items-center bg-[#55575b] text-[7px] font-bold text-white"><select class="min-w-0 flex-1 appearance-none bg-transparent text-center"><option>-6 dB</option></select><svg class="h-3 w-2 border-l border-[#888]"><use href="#step"/></svg></span>Snap Vol</label>
        </div>
      </div>
      <div class="ml-[7px] grid grid-cols-[40px_40px_40px_40px] content-start gap-y-[18px] pt-[21px]">
        <knob-dial label="1" angle="-150" light></knob-dial><knob-dial label="2" angle="-150" light></knob-dial><knob-dial label="3" angle="-150" light></knob-dial><knob-dial label="4" angle="-150" light></knob-dial><knob-dial label="5" angle="-150" light></knob-dial><knob-dial label="6" angle="-150" light></knob-dial><knob-dial label="7" angle="-150" light></knob-dial><knob-dial label="8" angle="-150" light></knob-dial>
      </div>
      <div class="ml-[4px] flex gap-[6px] pt-[18px] text-[7px]">
        <figure class="flex w-[70px] flex-col"><span class="h-3 pl-[1px]">X1:</span><svg class="h-[70px] w-full bg-[#0e151c]" viewBox="0 0 70 70"><path d="M35 30v10M30 35h10" stroke="#1d2932"/><circle cx="3.500" cy="66.500" r="3.200" fill="#4cb9ea"/></svg><figcaption class="pt-[5px] pr-[1px] text-right">Y1:</figcaption></figure>
        <figure class="flex w-[70px] flex-col"><span class="h-3 pl-[1px]">X2:</span><svg class="h-[70px] w-full bg-[#0e151c]" viewBox="0 0 70 70"><path d="M35 30v10M30 35h10" stroke="#1d2932"/><circle cx="3.500" cy="66.500" r="3.200" fill="#4cb9ea"/></svg><figcaption class="pt-[5px] pr-[1px] text-right">Y2:</figcaption></figure>
      </div>
      <div class="mr-[5px] ml-auto grid grid-cols-[30px_30px] content-start gap-y-[18px] pt-[21px]"><knob-dial label="Attack" angle="-150" light></knob-dial><knob-dial label="Decay" angle="-150" light></knob-dial><knob-dial label="Sustain" angle="-150" light></knob-dial><knob-dial label="Release" angle="-150" light></knob-dial></div>
    </div>
  </div>

  <footer class="relative flex h-[19px] items-center justify-center text-[12px] text-[#7e7e7e]"><button aria-label="Show more" class="absolute left-[6px] text-[7px]">▶</button>Alchemy</footer>
</article>

<script>
// Rotary control: angle in degrees from twelve o'clock, value arc starts at -145.
const point = (deg, r) => {
  const a = deg * Math.PI / 180;
  return (14 + r * Math.sin(a)).toFixed(2) + ' ' + (14 - r * Math.cos(a)).toFixed(2);
};
document.querySelectorAll('knob-dial').forEach(k => {
  const has = n => k.hasAttribute(n), angle = +k.getAttribute('angle');
  const light = has('light'), label = k.getAttribute('label'), side = k.getAttribute('side');
  const arc = has('arc') ? `<path d="M${point(-145, 10.2)}A10.200 10.200 0 ${angle > 35 ? 1 : 0} 1 ${point(angle, 10.2)}" fill="none" stroke="#3dbdd5" stroke-width="1.600"/>` : '';
  const svg = `<svg class="${has('small') ? 'size-5' : 'size-7'}" viewBox="0 0 28 28">
    <circle cx="14" cy="14" r="${light ? 10.5 : 12}" fill="${light ? '#b2b2b0' : '#2b3339'}"/>${arc}
    <circle cx="14" cy="14" r="7.500" fill="${has('lit') ? '#4fa3ba' : light ? '#454545' : '#595b5e'}"/>
    <path d="M${point(angle, 3)}L${point(angle, 7.5)}" stroke="#e8e8e8" stroke-width="1.500"/></svg>`;
  const input = `<input type="range" min="-160" max="160" value="${angle}" aria-label="${label || k.getAttribute('aria')}" class="sr-only">`;
  k.innerHTML = side
    ? `<label class="relative flex items-center gap-[2px]"><span>${side}</span>${svg}${input}</label>`
    : `<label class="relative flex flex-col items-center">${svg}${label ? `<span class="whitespace-nowrap">${label}</span>` : ''}${input}</label>`;
});

document.querySelectorAll('hslider-bar').forEach(s => {
  const v = s.getAttribute('value');
  s.innerHTML = `<label class="relative flex h-full items-center overflow-hidden rounded-full bg-[#3a3a36] p-[2px]">
    <span class="h-full rounded-l-full border-y border-[#4fa83c] bg-[#6fcf57]" style="width:${v}%"></span>
    <span class="-ml-1 aspect-square h-[9px] shrink-0 rounded-full bg-[#a8a8a8]"></span>
    <input type="range" value="${v}" aria-label="${s.getAttribute('label')}" class="absolute inset-0 w-full opacity-0"></label>`;
});

document.querySelectorAll('line-slider').forEach(s => {
  const v = s.getAttribute('value');
  s.innerHTML = `<span class="relative flex h-full items-center"><span class="h-[2px] w-full bg-[#363636]"></span>
    <span class="absolute size-[6px] -translate-x-1/2 rounded-full bg-[#8a8a8a]" style="left:${v}%"></span>
    <input type="range" value="${v}" class="absolute inset-0 w-full opacity-0"></span>`;
});

document.querySelectorAll('[data-strip]').forEach(s => {
  const bus = s.dataset.bus, name = s.dataset.strip;
  const ticks = Array.from({ length: 15 }, (_, i) => `<path d="M${i % 3 ? 2 : 0} ${i * 5.900 + 1}h3M18 ${i * 5.900 + 1}h5" stroke="#808080" stroke-width=".8"/>`).join('');
  s.innerHTML = `
    <button class="h-3 w-[42px] bg-[#4d4d4d] text-[7px] text-[#2f2f2f]">Setting</button>
    <span class="mt-[3px] h-px w-full bg-[#4a4a4a]"></span>
    <button class="mt-[3px] h-[18px] w-[42px] bg-[#545454] text-[7px] text-[#353535]">EQ</button>
    <button class="mt-[4px] h-[10px] w-[42px] text-[7px] ${bus ? 'invisible' : 'bg-[#545454] text-[#2f2f2f]'}">MIDI FX</button>
    <button class="mt-[5px] h-[11px] w-[42px] text-[7px] ${bus ? 'bg-[#4a4a4a]' : 'bg-[#2e7cc4] text-white'}">${bus ? '<svg class="mx-auto h-[6px] w-[10px]" viewBox="0 0 10 6"><circle cx="3.500" cy="3" r="2.300" fill="none" stroke="#ddd"/><circle cx="6.500" cy="3" r="2.300" fill="none" stroke="#ddd"/></svg>' : 'Alchemy'}</button>
    <button class="mt-[4px] h-[11px] w-[42px] bg-[#545454] text-[7px] text-[#2f2f2f]">Audio FX</button>
    <button class="mt-[5px] h-[11px] w-[42px] pr-3 text-[7px] ${bus ? 'invisible' : 'bg-[#555] text-[#2f2f2f]'}">Send</button>
    <button class="mt-[5px] h-[11px] w-[42px] text-[7px] ${bus ? 'invisible' : 'bg-[#4a4a4a] text-[#ddd]'}">Stereo Out</button>
    <button class="mt-[3px] h-[11px] w-[42px] bg-[#555] text-[7px] text-[#3a3a3a]">Group</button>
    <button class="mt-[2px] h-[11px] w-[42px] bg-[#4d4d4d] text-[7px] ${bus ? 'text-[#ddd]' : 'text-[#5fc856]'}">Read</button>
    <label class="relative mt-[4px]"><svg class="size-[22px]" viewBox="0 0 22 22"><path d="M5 19.500A10 10 0 0 1 10 1M12 1a10 10 0 0 1 5 18.500" fill="none" stroke="#2b2b2b" stroke-width="1.300"/><circle cx="11" cy="11" r="8" fill="#9b9b9b"/></svg><input type="range" aria-label="${name} pan" class="sr-only"></label>
    <div class="mt-[4px] flex gap-[3px] text-[7px]"><output class="h-[11px] w-[19px] rounded-xs bg-[#2c2c2c] pt-[2px] text-center">0.0</output><output class="h-[11px] w-[19px] rounded-xs bg-[#2c2c2c] pt-[2px] text-center text-[#d3a930]">-0.3</output></div>
    <label class="relative mt-[11px] pr-[2px]"><svg class="h-[85px] w-8" viewBox="0 0 32 85">${ticks}
      <path d="M6 0v84" stroke="#242424" stroke-width="1.400"/><path d="M1 14h11v20H1z" fill="#a8a8a8"/><path d="M1 14h11v4H1zM1 29h11v5H1z" fill="#d4d4d4"/><path d="M1 24h11" stroke="#555"/>
      <path d="M25 0h7v84h-7z" fill="#34362f"/><path d="M25.500 31h6v53h-6z" fill="#5cc44a"/><path d="M28.500 0v84" stroke="#3a5a33" stroke-width=".8"/></svg><input type="range" aria-label="${name} volume" class="sr-only"></label>
    <button class="mt-[3px] ml-[22px] h-[9px] w-[18px] text-[7px] ${bus ? 'bg-[#4a4a4a] text-[#ddd]' : 'invisible'}">Bnce</button>
    <div class="mt-[2px] flex gap-[3px] text-[8px]"><button class="h-3 w-[20px] bg-[#505050]">M</button><button class="h-3 w-[20px] bg-[#505050]">S</button></div>
    <span class="mt-[4px] h-[10px] whitespace-nowrap text-[7px]">${name}</span>`;
});
</script>
</body>
</html>
